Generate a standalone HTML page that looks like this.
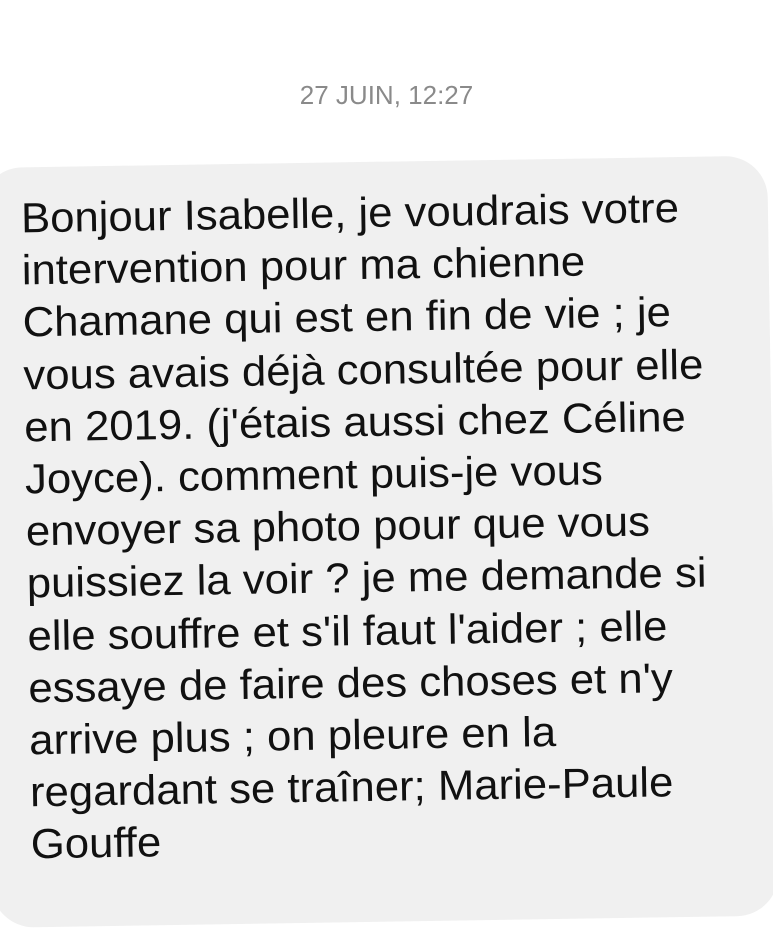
<!DOCTYPE html>
<html><head><meta charset="utf-8"><style>
html,body{margin:0;padding:0;width:773px;height:835px;overflow:hidden;background:#fff;font-family:"Liberation Sans",sans-serif;}
.ts{position:absolute;top:80px;left:0;width:773px;text-align:center;color:#8a8a8a;font-size:26px;}
.wrap{position:absolute;left:-20px;top:156px;width:787px;height:760px;transform:rotate(-0.9deg);transform-origin:0 0;}
.bub{position:absolute;left:0;top:12px;width:787px;height:760px;background:#f0f0f0;border-radius:42px;}
.t{position:absolute;left:40px;top:37px;font-size:42px;color:#111;line-height:52.2px;white-space:nowrap;}
.t div{transform:scaleX(1.04);transform-origin:0 0;}
</style></head><body>
<div class="ts">27 JUIN, 12:27</div>
<div class="wrap"><div class="bub"></div>
<div class="t">
<div>Bonjour Isabelle, je voudrais votre</div>
<div>intervention pour ma chienne</div>
<div>Chamane qui est en fin de vie ; je</div>
<div>vous avais déjà consultée pour elle</div>
<div>en 2019. (j'étais aussi chez Céline</div>
<div>Joyce). comment puis-je vous</div>
<div>envoyer sa photo pour que vous</div>
<div>puissiez la voir ? je me demande si</div>
<div>elle souffre et s'il faut l'aider ; elle</div>
<div>essaye de faire des choses et n'y</div>
<div>arrive plus ; on pleure en la</div>
<div>regardant se traîner; Marie-Paule</div>
<div>Gouffe</div>
</div></div>
</body></html>
